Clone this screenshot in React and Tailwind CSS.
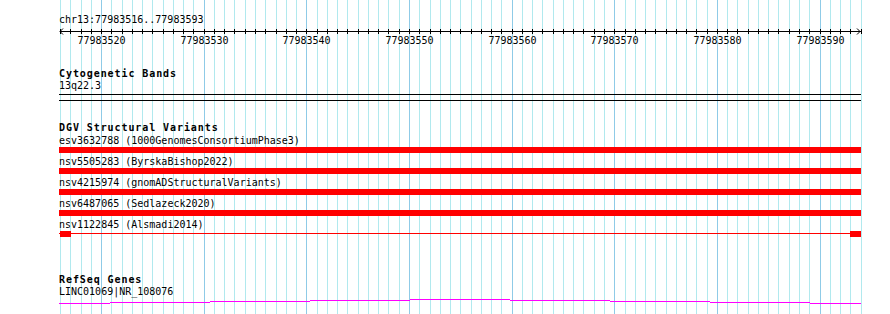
import React from "react";

// region shown: chr13:77983516..77983593
const START = 77983516;
const BASES = 78;
const X0 = 60; // page x of first base boundary
const BP = 10.264; // px per base
const PAD = 59; // left edge of the tracks

const bx = (k) => Math.round(X0 + BP * k);

const variants = [
  { id: "esv3632788", src: "1000GenomesConsortiumPhase3", full: true },
  { id: "nsv5505283", src: "ByrskaBishop2022", full: true },
  { id: "nsv4215974", src: "gnomADStructuralVariants", full: true },
  { id: "nsv6487065", src: "Sedlazeck2020", full: true },
  { id: "nsv1122845", src: "Alsmadi2014", full: false },
];

// gene intron line, slight arc drawn in steps
const geneSteps = [
  [59, 110, 5],
  [110, 210, 4],
  [210, 310, 3],
  [310, 410, 2],
  [410, 510, 1],
  [510, 610, 2],
  [610, 710, 3],
  [710, 810, 4],
  [810, 861, 5],
];

function Grid() {
  const lines = [];
  for (let k = 0; k <= BASES; k++) {
    const major = (START + k) % 10 === 0;
    lines.push(
      <rect
        key={k}
        x={bx(k)}
        y={0}
        width={1}
        height={314}
        fill={major ? "#8fcbe7" : "#b1e9ee"}
      />
    );
  }
  return (
    <svg className="absolute inset-0" width="890" height="314" shapeRendering="crispEdges">
      {lines}
    </svg>
  );
}

function Ruler() {
  const ticks = [];
  const labels = [];
  for (let k = 0; k <= BASES; k++) {
    const x = bx(k) - PAD;
    ticks.push(<rect key={k} x={x} y={3} width={1} height={5} fill="#000" />);
    if ((START + k) % 10 === 0) {
      labels.push(
        <text key={k} x={x + 0.5} y={18} textAnchor="middle" fontSize="10" fill="#000">
          {START + k}
        </text>
      );
    }
  }
  return (
    <svg width="802" height="22" className="block overflow-visible" style={{ fontFamily: "'DejaVu Sans Mono', monospace" }}>
      <rect x={1} y={5} width={801} height={1} fill="#000" shapeRendering="crispEdges" />
      <g shapeRendering="crispEdges">{ticks}</g>
      <path d="M4 2.5 L1 5.5 L4 8.5" fill="none" stroke="#000" strokeWidth="1" />
      <path d="M798 2.5 L801 5.5 L798 8.5" fill="none" stroke="#000" strokeWidth="1" />
      {labels}
    </svg>
  );
}

function Heading({ children, className = "" }) {
  return (
    <div className={"h-[12px] text-[10px] leading-[12px] font-bold tracking-[0.92px] whitespace-nowrap " + className}>
      {children}
    </div>
  );
}

function Label({ children }) {
  return <div className="h-[12px] text-[10px] leading-[12px] whitespace-nowrap">{children}</div>;
}

function VariantRow({ v }) {
  return (
    <div className="mb-[3px]">
      <Label>
        {v.id} ({v.src})
      </Label>
      {v.full ? (
        <div className="h-[6px] w-[802px] bg-[#ff0000]" />
      ) : (
        <div className="relative h-[6px] w-[802px] flex items-center justify-between">
          <div className="absolute left-0 right-0 top-[2px] h-px bg-[#ff0000]" />
          <div className="relative h-[6px] w-[11px] bg-[#ff0000] ml-px" />
          <div className="relative h-[6px] w-[11px] bg-[#ff0000]" />
        </div>
      )}
    </div>
  );
}

function GeneLine() {
  return (
    <svg width="802" height="8" className="block" shapeRendering="crispEdges">
      {geneSteps.map(([a, b, y], i) => (
        <rect key={i} x={a - PAD} y={y} width={b - a} height={1} fill="#ff00ff" />
      ))}
    </svg>
  );
}

export default function App() {
  return (
    <div
      className="relative w-[890px] h-[314px] overflow-hidden bg-white text-black"
      style={{ fontFamily: "'DejaVu Sans Mono', 'Liberation Mono', monospace" }}
    >
      <Grid />
      <div className="relative pl-[59px] pt-[14px] w-[861px]">
        <Label>chr13:77983516..77983593</Label>
        <Ruler />

        {/* Cytogenetic Bands */}
        <Heading className="mt-[20px]">Cytogenetic Bands</Heading>
        <Label>13q22.3</Label>
        <div className="mt-[2px] h-[7px] w-[802px] border-y border-black" />

        {/* DGV */}
        <Heading className="mt-[21px]">DGV Structural Variants</Heading>
        <div className="mt-px">
          {variants.map((v) => (
            <VariantRow key={v.id} v={v} />
          ))}
        </div>

        {/* RefSeq */}
        <Heading className="mt-[37px]">RefSeq Genes</Heading>
        <Label>LINC01069|NR_108076</Label>
        <GeneLine />
      </div>
    </div>
  );
}
